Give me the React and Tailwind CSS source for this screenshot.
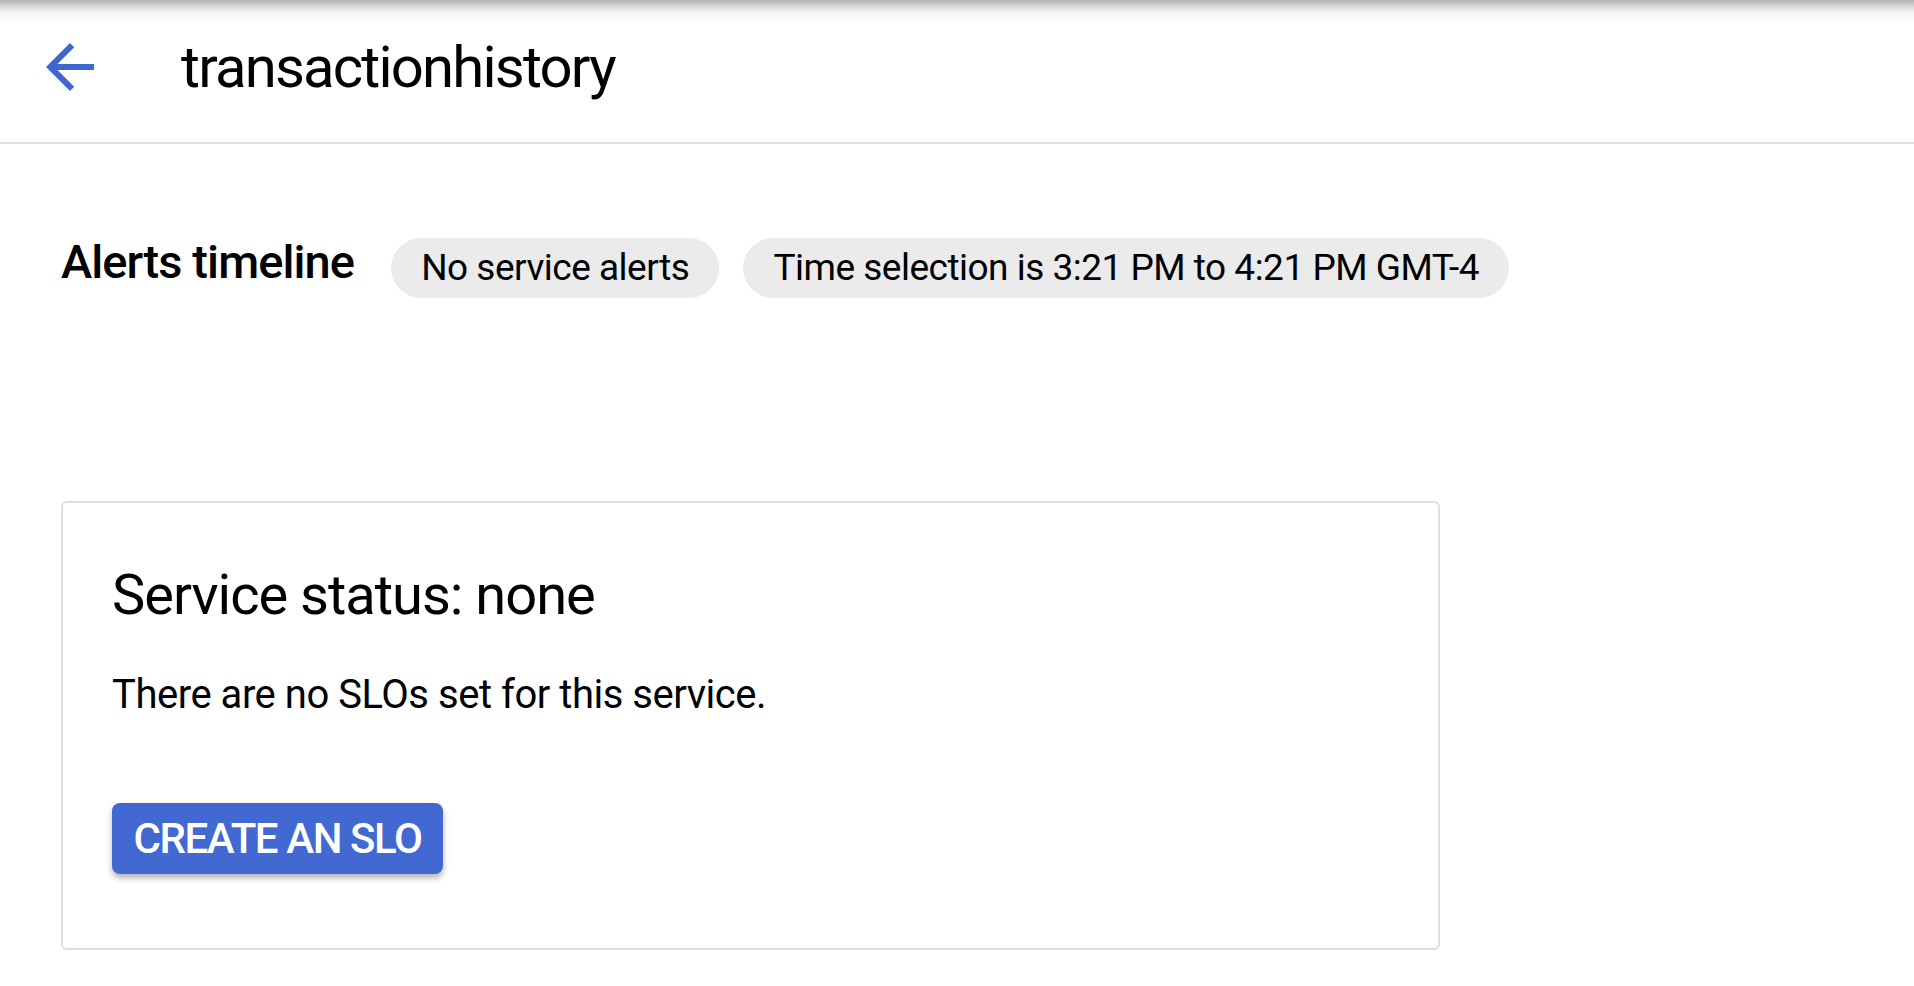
import React from 'react';

const BackArrow = () => (
  <svg viewBox="0 0 24 24" className="w-[72px] h-[72px] shrink-0" fill="#3f67d1">
    <path d="M20 11H7.83l5.59-5.59L12 4l-8 8 8 8 1.41-1.41L7.83 13H20v-2z" />
  </svg>
);

const Chip = ({ children }) => (
  <div className="h-[60px] px-[30px] flex items-center rounded-full bg-[#ebebeb] text-[37px] leading-[46px] tracking-[-0.5px] text-black">
    {children}
  </div>
);

const App = () => {
  return (
    <div className="min-h-screen bg-white text-black font-['Roboto',_'Liberation_Sans',_sans-serif]">
      {/* Header */}
      <header className="h-[144px] flex items-center pl-[34px] pb-[8px] border-b-2 border-[#e0e0e0] bg-[linear-gradient(to_bottom,#b3b3b3,#f4f4f4_12px,#ffffff_24px)]">
        <BackArrow />
        <h1 className="ml-[75px] text-[58px] leading-[76px] tracking-[-1.8px] font-normal">transactionhistory</h1>
      </header>

      <main className="px-[61px]">
        {/* Alerts timeline */}
        <div className="mt-[94px] flex items-center">
          <h2 className="text-[47px] leading-[44px] tracking-[-0.9px] font-medium mb-[12px]">Alerts timeline</h2>
          <div className="ml-[37px] flex gap-[24px]">
            <Chip>No service alerts</Chip>
            <Chip>Time selection is 3:21 PM to 4:21 PM GMT-4</Chip>
          </div>
        </div>

        {/* Service status card */}
        <section className="mt-[203px] w-[1379px] border-2 border-[#dedede] rounded-md pl-[49px] pt-[56px] pb-[74px]">
          <h3 className="text-[56px] leading-[72px] tracking-[-1px] font-normal">Service status: none</h3>
          <p className="mt-[38px] text-[40px] leading-[52px] tracking-[-0.47px]">There are no SLOs set for this service.</p>
          <button className="mt-[82px] h-[71px] w-[331px] flex items-center justify-center rounded-lg bg-[#4169d1] text-white text-[42px] tracking-[-1.4px] font-medium shadow-[0_4px_6px_rgba(0,0,0,0.3)]">
            CREATE AN SLO
          </button>
        </section>
      </main>
    </div>
  );
};

export default App;
